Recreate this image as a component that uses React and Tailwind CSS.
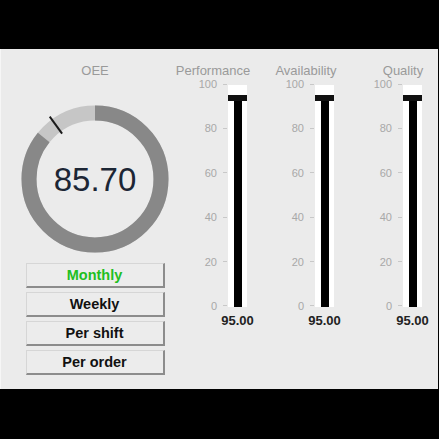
import React from 'react';

const PERIODS = ['Monthly', 'Weekly', 'Per shift', 'Per order'];
const ACTIVE = 'Monthly';

const METRICS = [
    { name: 'Performance', value: 95, shift: '-translate-x-[5px]', gap: 'ml-0' },
    { name: 'Availability', value: 95, shift: 'translate-x-[1px]', gap: 'ml-[29px]' },
    { name: 'Quality', value: 95, shift: 'translate-x-[10px]', gap: 'ml-[30px]' },
];

const TICKS = [100, 80, 60, 40, 20, 0];

function Gauge({ value, target }) {
    const r = 66;
    const c = 2 * Math.PI * r;
    const a = (target / 100) * 2 * Math.PI;
    const cx = 74, cy = 74;
    const x1 = cx + Math.sin(a) * 56, y1 = cy - Math.cos(a) * 56;
    const x2 = cx + Math.sin(a) * 77, y2 = cy - Math.cos(a) * 77;
    return (
        <div className="relative w-[148px] h-[150px]">
            <svg width="148" height="150" viewBox="0 0 148 150" className="overflow-visible">
                <circle cx={cx} cy={cy} r={r} fill="none" stroke="#c6c6c6" strokeWidth="15" />
                <circle
                    cx={cx} cy={cy} r={r} fill="none" stroke="#888888" strokeWidth="15"
                    strokeDasharray={`${(value / 100) * c} ${c}`}
                    transform={`rotate(-90 ${cx} ${cy})`}
                />
                <line x1={x1} y1={y1} x2={x2} y2={y2} stroke="#1a1a1a" strokeWidth="2" />
            </svg>
            <div className="absolute left-0 top-0 w-[148px] h-[148px] flex items-center justify-center text-[33px] text-[#1c2635] leading-none">
                {value.toFixed(2)}
            </div>
        </div>
    );
}

function BarColumn({ metric }) {
    return (
        <div className={`flex flex-col w-[58px] ${metric.gap}`}>
            <div className={`h-[15px] flex justify-center ${metric.shift}`}>
                <span className="leading-[15px] text-[13px] text-[#9a9a9a] whitespace-nowrap">{metric.name}</span>
            </div>
            <div className="flex">
                <div className="w-[28px] h-[234px] flex flex-col justify-between text-right text-[11px] leading-[12px] text-[#a8a8a8]">
                    {TICKS.map(t => <div key={t}>{t}</div>)}
                </div>
                <div className="w-[11px] h-[234px] flex flex-col justify-between">
                    {TICKS.map(t => (
                        <div key={t} className="h-[12px] flex items-center pl-[6px]">
                            <div className="w-[4px] h-px bg-[#c8c8c8]" />
                        </div>
                    ))}
                </div>
                <div className="w-[19px] pt-[7px]">
                    <div className="h-[222px] bg-white flex flex-col justify-end">
                        <div className="flex flex-col items-center" style={{ height: `${metric.value * 2.22 + 1}px` }}>
                            <div className="w-full h-[6px] bg-[#111]" />
                            <div className="flex-1 w-[8px] bg-black" />
                        </div>
                    </div>
                </div>
            </div>
            <div className="ml-[39px] w-[19px] mt-[1px] flex justify-center">
                <span className="text-[13px] font-bold text-[#222] leading-[15px] whitespace-nowrap">
                    {metric.value.toFixed(2)}
                </span>
            </div>
        </div>
    );
}

export default function App() {
    return (
        <div className="w-[439px] h-[439px] bg-black pt-[49px]" style={{ fontFamily: '"Liberation Sans", Arial, sans-serif' }}>
            <div className="w-[438px] h-[340px] bg-[#ebebeb] border-l border-[#f6f6f6] flex pt-[14px]">
                {/* Left: OEE gauge and period buttons */}
                <div className="w-[188px] flex flex-col items-center">
                    <div className="h-[15px] leading-[15px] text-[13px] text-[#9a9a9a]">OEE</div>
                    <div className="mt-[27px]">
                        <Gauge value={85.7} target={90} />
                    </div>
                    <div className="mt-[8px] flex flex-col gap-[4px]">
                        {PERIODS.map(p => (
                            <button
                                key={p}
                                className={`w-[139px] h-[25px] bg-[#ececec] border-t border-l border-[#d6d6d6] border-b-2 border-r-2 border-b-[#8c8c8c] border-r-[#8c8c8c] text-[14.5px] font-bold leading-none ${p === ACTIVE ? 'text-[#1fbf1f]' : 'text-[#111]'}`}
                            >
                                {p}
                            </button>
                        ))}
                    </div>
                </div>

                {/* Right: metric bars */}
                <div className="flex">
                    {METRICS.map(m => <BarColumn key={m.name} metric={m} />)}
                </div>
            </div>
        </div>
    );
}
